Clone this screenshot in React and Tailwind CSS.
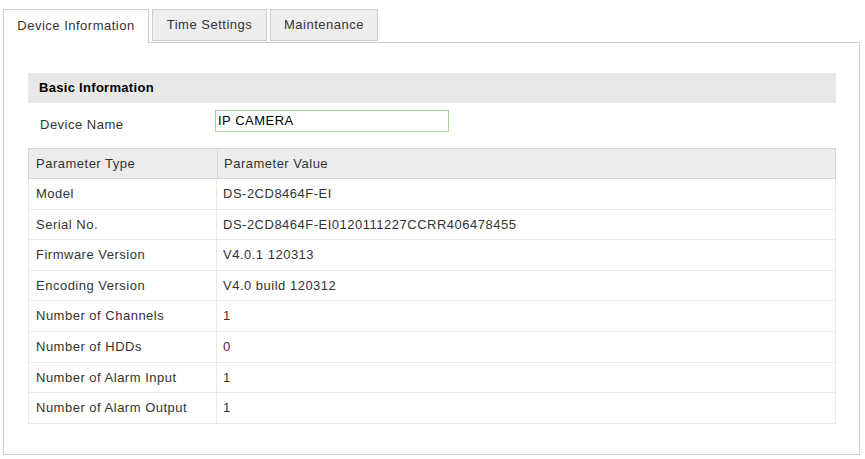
import React from "react";

const rows = [
  ["Model", "DS-2CD8464F-EI"],
  ["Serial No.", "DS-2CD8464F-EI0120111227CCRR406478455"],
  ["Firmware Version", "V4.0.1 120313"],
  ["Encoding Version", "V4.0 build 120312"],
  ["Number of Channels", "1"],
  ["Number of HDDs", "0"],
  ["Number of Alarm Input", "1"],
  ["Number of Alarm Output", "1"],
];

export default function App() {
  return (
    <div
      className="w-[865px] h-[459px] bg-white text-[13px] text-[#333] tracking-[0.5px] overflow-hidden"
      style={{ fontFamily: '"Liberation Sans", Arial, sans-serif' }}
    >
      <div className="flex items-start gap-[3px] ml-[3px] pt-[9px] h-[42px]">
        <div className="relative z-10 h-[34px] w-[146px] border border-b-0 border-[#cccccc] bg-white flex items-center justify-center pb-[1px]">
          Device Information
        </div>
        <div className="h-[32px] w-[115px] border border-[#cccccc] bg-[#eeeeee] flex items-center justify-center">
          Time Settings
        </div>
        <div className="h-[32px] w-[108px] border border-[#cccccc] bg-[#eeeeee] flex items-center justify-center">
          Maintenance
        </div>
      </div>
      <div className="ml-[3px] w-[857px] h-[413px] border border-[#cccccc] pl-[24px] pt-[30px]">
        <div className="w-[808px] h-[30px] bg-[#e8e8e8] flex items-center pl-[11px] font-bold text-black tracking-[0.3px]">
          Basic Information
        </div>
        <div className="w-[808px] h-[45px] flex items-start">
          <div className="w-[187px] pl-[12px] pt-[12px]">Device Name</div>
          <div className="mt-[7px] w-[234px] h-[22px] border border-[#b3cf9b] flex items-center pl-[2px] text-black">
            IP CAMERA
          </div>
        </div>
        <div className="w-[808px] border-l border-r border-[#eceae0]">
          <div className="flex h-[31px] bg-[#ececec] border border-[#d6d6d6] -mx-px">
            <div className="w-[189px] border-r border-[#d6d6d6] flex items-center pl-[7px]">
              Parameter Type
            </div>
            <div className="flex-1 flex items-center pl-[6px]">Parameter Value</div>
          </div>
          {rows.map(([k, v]) => (
            <div key={k} className="flex h-[30.6px] border-b border-[#eceae0]">
              <div className="w-[188px] border-r border-[#eceae0] flex items-center pl-[7px]">
                {k}
              </div>
              <div className="flex-1 flex items-center pl-[6px]">{v}</div>
            </div>
          ))}
        </div>
      </div>
    </div>
  );
}
